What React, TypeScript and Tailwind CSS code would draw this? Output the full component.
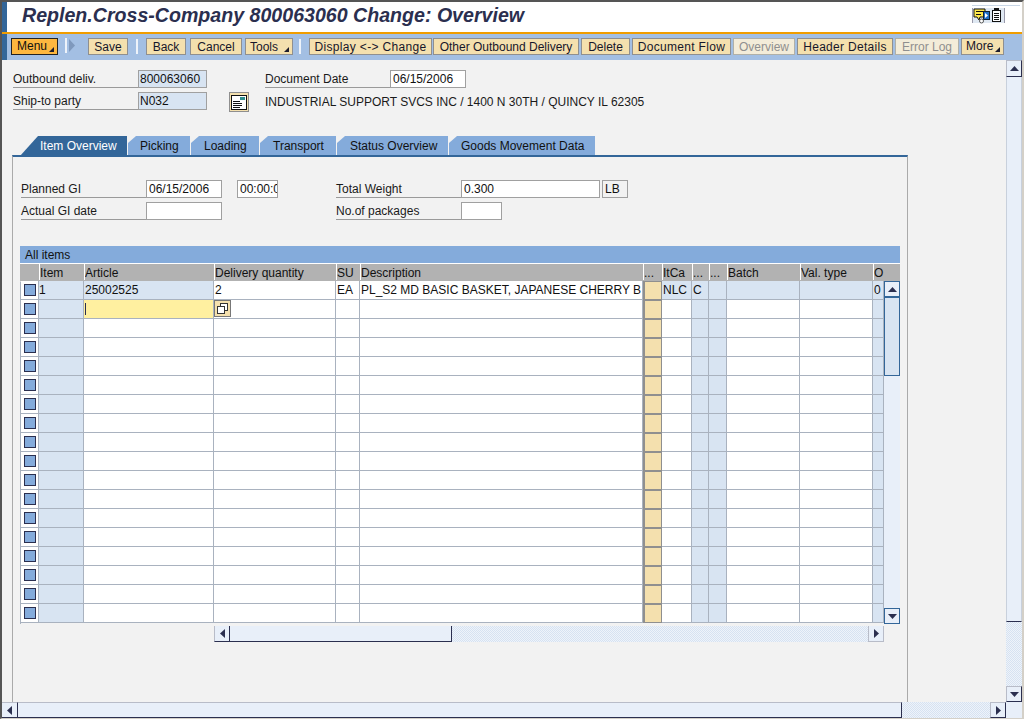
import React from 'react';

const font = { fontFamily: '"Liberation Sans", Arial, sans-serif' };

const toolButtons = [
  { label: 'Display <-> Change', cls: 'w-[123px] ml-[8px] tracking-[0.33px]' },
  { label: 'Other Outbound Delivery', cls: 'w-[146px] ml-[1px]' },
  { label: 'Delete', cls: 'w-[49px] ml-[2px]' },
  { label: 'Document Flow', cls: 'w-[99px] ml-[2px] tracking-[0.3px]' },
  { label: 'Overview', cls: 'w-[62px] ml-[2px]', off: true },
  { label: 'Header Details', cls: 'w-[96px] ml-[2px] tracking-[0.3px]' },
  { label: 'Error Log', cls: 'w-[64px] ml-[2px]', off: true },
];

const columns = [
  { name: '', cls: 'bg-white' },
  { name: 'Item', cls: 'bg-[#d8e4f2]' },
  { name: 'Article', cls: 'bg-white' },
  { name: 'Delivery quantity', cls: 'bg-white' },
  { name: 'SU', cls: 'bg-white' },
  { name: 'Description', cls: 'bg-white' },
  { name: '...', cls: 'bg-[#f4e0ae]' },
  { name: 'ItCa', cls: 'bg-white' },
  { name: '...', cls: 'bg-[#d8e4f2]' },
  { name: '...', cls: 'bg-[#d8e4f2]' },
  { name: 'Batch', cls: 'bg-white' },
  { name: 'Val. type', cls: 'bg-white' },
  { name: 'O', cls: 'bg-[#d8e4f2]' },
];

const firstRow = ['', '1', '25002525', '2', 'EA', 'PL_S2 MD BASIC BASKET, JAPANESE CHERRY B', '', 'NLC', 'C', '', '', '', '0'];
const firstRowBlue = [1, 2, 7, 8, 9, 10, 11, 12];
const rows = Array.from({ length: 18 }, (_, i) => i);
const gridCols = 'grid grid-cols-[18px_45px_130px_122px_24px_283px_19px_30px_17px_18px_73px_73px_11px]';

const Arrow = ({ dir, className = '' }: { dir: 'up' | 'down' | 'left' | 'right'; className?: string }) => {
  const points = { up: '0,5 4.5,0 9,5', down: '0,0 9,0 4.5,5', left: '5,0 5,9 0,4.5', right: '0,0 5,4.5 0,9' }[dir];
  const vertical = dir === 'up' || dir === 'down';
  return (
    <svg width={vertical ? 9 : 5} height={vertical ? 5 : 9} className={className}>
      <polygon points={points} fill="#2b2f4f" />
    </svg>
  );
};

const Corner = () => (
  <svg width="5" height="5" className="absolute right-[3px] bottom-[2px]">
    <polygon points="5,0 5,5 0,5" fill="#1c1c2c" />
  </svg>
);

const Button = ({ label, cls, off }: { label: string; cls: string; off?: boolean }) => (
  <div
    className={`h-[17px] flex items-center justify-center border whitespace-nowrap text-[12px] leading-none ${cls} ${
      off ? 'bg-[#f3ecd9] border-[#b0b0a8] text-[#8f8f8f]' : 'bg-[#f4e0ae] border-[#8f8f8f] text-[#16162a]'
    }`}
  >
    {label}
  </div>
);

const Sep = ({ cls }: { cls: string }) => <div className={`w-[2px] h-[15px] bg-[#eef3fa] mt-[1px] ${cls}`} />;

const Label = ({ text, cls }: { text: string; cls: string }) => (
  <div className={`h-[18px] border-b-[1.5px] border-[#9a9a9a] text-[12px] leading-[19px] text-[#1a1a1a] ${cls}`}>{text}</div>
);

const Input = ({ value = '', cls }: { value?: string; cls: string }) => (
  <div className={`h-[18px] border border-[#a0a0a0] text-[12px] leading-[17px] pl-[1px] overflow-hidden whitespace-nowrap text-[#111] ${cls}`}>
    {value}
  </div>
);

const tabs = [
  { label: 'Picking', cls: 'w-[62px] ml-[1px] pl-[12px]' },
  { label: 'Loading', cls: 'w-[68px] ml-[1px] pl-[13px]' },
  { label: 'Transport', cls: 'w-[76px] ml-[1px] pl-[13px]' },
  { label: 'Status Overview', cls: 'w-[111px] ml-[1px] pl-[13px]' },
  { label: 'Goods Movement Data', cls: 'w-[146px] ml-[1px] pl-[12px]' },
];

const CopyIcon = () => (
  <svg width="11" height="11" viewBox="0 0 11 11">
    <rect x="3.5" y="0.5" width="7" height="7" fill="#fff" stroke="#333" />
    <rect x="0.5" y="3.5" width="7" height="7" fill="#fff" stroke="#333" />
  </svg>
);

const ScrollBtn = ({ children, cls }: { children: React.ReactNode; cls: string }) => (
  <div className={`flex items-center justify-center shrink-0 bg-[#e8eff9] ${cls}`}>{children}</div>
);

const dither = 'bg-[repeating-conic-gradient(#eef3fa_0_25%,#d6e2f1_0_50%)] bg-[length:2px_2px]';

export default function App() {
  return (
    <div style={font} className="w-[1024px] h-[719px] flex flex-col overflow-hidden bg-[#f2f2f2] border-t-2 border-l-2 border-[#555] border-r-2 border-r-[#d4d0c8] border-b-[#d4d0c8] border-b">
      {/* title */}
      <div className="relative h-[30px] shrink-0 bg-white flex items-center border-l-[5px] border-[#336699] pl-[15px] pb-[2px]">
        <span className="text-[19.6px] font-bold italic text-[#2b2f4f] whitespace-nowrap">
          Replen.Cross-Company 800063060 Change: Overview
        </span>
        <div className="absolute right-[2px] top-[3px] w-[48px] h-[1px] bg-[#c8d6e6]" />
        <svg width="33" height="17" viewBox="0 0 33 17" className="absolute right-[17px] top-[5px]">
          <line x1="0.5" y1="1" x2="0.5" y2="16" stroke="#99a" />
          <rect x="1" y="1" width="31" height="15" fill="#dfe8f2" />
          <polygon points="2,2 13,2 13,10 8,10 7,13 5,10 2,10" fill="#ffe94d" stroke="#111" />
          <line x1="4" y1="4.5" x2="11" y2="4.5" stroke="#111" />
          <line x1="4" y1="7.5" x2="9" y2="7.5" stroke="#111" />
          <rect x="11.5" y="4.5" width="6" height="8" fill="#1f6fc8" stroke="#123" />
          <polygon points="13,6 16,8.5 13,11" fill="#fff" />
          <circle cx="9.5" cy="14" r="2" fill="#fff" stroke="#555" />
          <rect x="20.5" y="3.5" width="8" height="11" fill="#fff" stroke="#111" />
          <rect x="22" y="1" width="5" height="3" fill="#111" />
          <line x1="22" y1="6.5" x2="27" y2="6.5" stroke="#111" />
          <line x1="22" y1="8.5" x2="27" y2="8.5" stroke="#111" />
          <line x1="22" y1="10.5" x2="27" y2="10.5" stroke="#111" />
          <line x1="22" y1="12.5" x2="27" y2="12.5" stroke="#111" />
          <line x1="32.5" y1="1" x2="32.5" y2="16" stroke="#99a" />
        </svg>
      </div>
      <div className="h-[2px] shrink-0 bg-[#f09d00]" />

      {/* toolbar */}
      <div className="h-[26px] shrink-0 bg-[#a3bfe3] flex items-start border-l-[5px] border-[#336699] pl-[4px] pt-[4px]">
        <div className="relative w-[47px] h-[17px] bg-[#fdb73f] border border-[#222] text-[12px] leading-[15px] pl-[5px] text-[#111]">
          Menu
          <Corner />
        </div>
        <svg width="10" height="15" className="ml-[7px]">
          <rect x="0" y="0" width="2" height="15" fill="#eef3fa" />
          <polygon points="4,1 10,7.5 4,14" fill="#7f99bd" />
        </svg>
        <Button label="Save" cls="w-[40px] ml-[13px]" />
        <Sep cls="ml-[8px]" />
        <Button label="Back" cls="w-[40px] ml-[8px]" />
        <Button label="Cancel" cls="w-[52px] ml-[4px]" />
        <div className="relative w-[48px] h-[17px] ml-[3px] bg-[#f4e0ae] border border-[#8f8f8f] text-[12px] leading-[16px] pl-[4px] text-[#16162a]">
          Tools
          <Corner />
        </div>
        <Sep cls="ml-[6px]" />
        {toolButtons.map((b) => (
          <Button key={b.label} label={b.label} cls={b.cls} off={b.off} />
        ))}
        <div className="relative w-[43px] h-[17px] ml-[2px] bg-[#f4e0ae] border border-[#8f8f8f] text-[12px] leading-[15px] pl-[4px] text-[#16162a]">
          More
          <Corner />
        </div>
      </div>

      {/* scrolling area */}
      <div className="flex-1 flex min-h-0">
        <div className="w-[1004px] shrink-0 pl-[10px] pt-[10px] flex flex-col">
          <div className="flex pl-[1px]">
            <Label text="Outbound deliv." cls="w-[125px]" />
            <Input value="800063060" cls="w-[69px] bg-[#d8e4f2]" />
            <Label text="Document Date" cls="w-[125px] ml-[58px]" />
            <Input value="06/15/2006" cls="w-[76px] bg-white pl-[2px]" />
          </div>
          <div className="flex pl-[1px] mt-[4px] h-[20px]">
            <Label text="Ship-to party" cls="w-[125px]" />
            <Input value="N032" cls="w-[69px] bg-[#d8e4f2]" />
            <div className="w-[20px] h-[20px] ml-[22px] bg-[#f4e0ae] border border-[#8f8f8f] flex items-center justify-center">
              <svg width="16" height="15" viewBox="0 0 16 15">
                <rect x="0.5" y="0.5" width="15" height="14" fill="#fff" stroke="#111" />
                <rect x="9" y="2" width="5" height="3" fill="#2f8f8f" />
                <line x1="2" y1="6.5" x2="9" y2="6.5" stroke="#111" />
                <line x1="2" y1="8.5" x2="11" y2="8.5" stroke="#111" />
                <line x1="2" y1="10.5" x2="11" y2="10.5" stroke="#111" />
                <line x1="2" y1="12.5" x2="9" y2="12.5" stroke="#111" />
              </svg>
            </div>
            <span className="ml-[16px] text-[12px] leading-[20px] text-[#1a1a1a] whitespace-nowrap">
              INDUSTRIAL SUPPORT SVCS INC / 1400 N 30TH / QUINCY IL 62305
            </span>
          </div>

          {/* tabs */}
          <div className="flex mt-[24px] h-[19px] ml-[8px] shrink-0">
            <div className="w-[107px] h-[20px] bg-[#336699] text-white text-[12px] leading-[20px] pl-[20px] whitespace-nowrap [clip-path:polygon(18px_0,100%_0,100%_100%,0_100%)]">
              Item Overview
            </div>
            {tabs.map((t) => (
              <div
                key={t.label}
                className={`h-[19px] bg-[#84abdb] text-[#111] text-[12px] leading-[20px] whitespace-nowrap [clip-path:polygon(8px_0,100%_0,100%_100%,0_100%,0_7px)] ${t.cls}`}
              >
                {t.label}
              </div>
            ))}
          </div>

          {/* panel */}
          <div className="w-[896px] flex-1 min-h-0 border-t-2 border-t-[#336699] border-x border-x-[#aaa] pl-[8px] pt-[23px]">
            <div className="flex">
              <Label text="Planned GI" cls="w-[125px]" />
              <Input value="06/15/2006" cls="w-[76px] bg-white pl-[2px]" />
              <div className="w-[41px] ml-[15px]">
                {/* the field clips its value at the right edge, as in the original */}
                <Input value="00:00:0" cls="w-[41px] bg-white pl-[2px]" />
              </div>
              <Label text="Total Weight" cls="w-[125px] ml-[58px]" />
              <Input value="0.300" cls="w-[139px] bg-white pl-[2px]" />
              <Input value="LB" cls="w-[26px] ml-[2px] bg-[#f2f2f2] pl-[2px]" />
            </div>
            <div className="flex mt-[4px]">
              <Label text="Actual GI date" cls="w-[125px]" />
              <Input cls="w-[76px] bg-white" />
              <Label text="No.of packages" cls="w-[125px] ml-[114px]" />
              <Input cls="w-[41px] bg-white" />
            </div>

            {/* table */}
            <div className="mt-[26px] w-[880px] -ml-[1px]">
              <div className="h-[17px] bg-[#84abdb] text-[12px] leading-[18px] pl-[5px] text-[#111]">All items</div>
              <div className="h-[1px] bg-white" />
              <div className="flex h-[17px] bg-[#b2b2b2] pl-[1px]">
                <div className={`${gridCols} w-[863px]`}>
                  {columns.map((c, i) => (
                    <div
                      key={i}
                      className={`h-[16px] text-[12px] leading-[18px] overflow-hidden whitespace-nowrap text-[#111] ${
                        i > 0 ? 'border-l border-white' : ''
                      }`}
                    >
                      {c.name}
                    </div>
                  ))}
                </div>
              </div>
              <div className="flex">
                <div className="border-l border-[#a9b2bf] border-t border-t-white">
                  <div className={`${gridCols} w-[863px] -mt-[1px]`}>
                    {rows.map((r) =>
                      columns.map((c, i) => {
                        const blue = r === 0 && firstRowBlue.includes(i);
                        const yellow = r === 1 && i === 2;
                        const bg = blue ? 'bg-[#d8e4f2]' : yellow ? 'bg-[#fff0a0]' : c.cls;
                        const edge =
                          i === 6
                            ? 'border-l-2 border-r border-y border-[#8f8f8f]'
                            : 'border-r border-b border-[#a9b2bf]';
                        return (
                          <div
                            key={`${r}-${i}`}
                            className={`h-[19px] text-[12px] leading-[18px] overflow-hidden whitespace-nowrap text-[#111] ${bg} ${edge} ${
                              i === 1 ? 'pl-0' : 'pl-[1px]'
                            }`}
                          >
                            {i === 0 && (
                              <div className="w-[12px] h-[12px] mt-[3px] ml-[2px] bg-[#84abdb] border border-[#2b2f4f]" />
                            )}
                            {r === 0 && firstRow[i]}
                            {yellow && <div className="w-[1px] h-[12px] mt-[3px] bg-[#2b2f4f]" />}
                            {r === 1 && i === 3 && (
                              <div className="w-[17px] h-[17px] -ml-[1px] bg-[#f4e0ae] border border-[#777] flex items-center justify-center">
                                <CopyIcon />
                              </div>
                            )}
                          </div>
                        );
                      })
                    )}
                  </div>
                </div>
                <div className="w-[16px] h-[343px] flex flex-col bg-[#e8eff9]">
                  <ScrollBtn cls="h-[16px] bg-[#d8e4f2] border border-[#336699]">
                    <Arrow dir="up" />
                  </ScrollBtn>
                  <div className="h-[79px] bg-[#d8e4f2] border border-[#336699]" />
                  <div className="flex-1" />
                  <ScrollBtn cls="h-[16px] bg-[#d8e4f2] border border-[#336699]">
                    <Arrow dir="down" />
                  </ScrollBtn>
                </div>
              </div>
              {/* table horizontal scrollbar */}
              <div className="flex ml-[194px] mt-[2px] w-[670px] h-[16px]">
                <ScrollBtn cls="w-[16px] border-l border-[#b8bcc8] border-b border-b-[#2b2f4f] border-r border-r-[#2b2f4f]">
                  <Arrow dir="left" />
                </ScrollBtn>
                <div className="w-[222px] bg-[#e8eff9] border-b border-[#2b2f4f] border-r" />
                <div className={`flex-1 ${dither}`} />
                <ScrollBtn cls="w-[16px] border-l border-[#b8bcc8] border-b border-r border-[#2b2f4f]">
                  <Arrow dir="right" />
                </ScrollBtn>
              </div>
            </div>
          </div>
        </div>

        {/* page vertical scrollbar */}
        <div className="w-[16px] shrink-0 flex flex-col">
          <ScrollBtn cls="h-[17px] border border-[#b8bcc8] border-b-[#2b2f4f] border-r-[#2b2f4f]">
            <Arrow dir="up" />
          </ScrollBtn>
          <div className="h-[545px] bg-[#e8eff9] border-x border-[#c8d0dc] border-b border-b-[#2b2f4f]" />
          <div className={`flex-1 ${dither}`} />
          <ScrollBtn cls="h-[16px] border border-[#b8bcc8] border-b-[#2b2f4f] border-r-[#2b2f4f]">
            <Arrow dir="down" />
          </ScrollBtn>
        </div>
      </div>

      {/* page horizontal scrollbar */}
      <div className="h-[16px] shrink-0 flex">
        <ScrollBtn cls="w-[16px] border-t border-[#b8bcc8] border-b border-b-[#2b2f4f] border-r border-r-[#2b2f4f]">
          <Arrow dir="left" />
        </ScrollBtn>
        <div className="w-[884px] bg-[#e8eff9] border-y border-y-[#b8bcc8] border-b-[#2b2f4f] border-r border-r-[#2b2f4f]" />
        <div className={`flex-1 ${dither}`} />
        <ScrollBtn cls="w-[16px] border-t border-[#b8bcc8] border-l border-b border-b-[#2b2f4f] border-r border-r-[#2b2f4f]">
          <Arrow dir="right" />
        </ScrollBtn>
        <div className="w-[16px] shrink-0 bg-[#e8eff9]" />
      </div>
    </div>
  );
}
